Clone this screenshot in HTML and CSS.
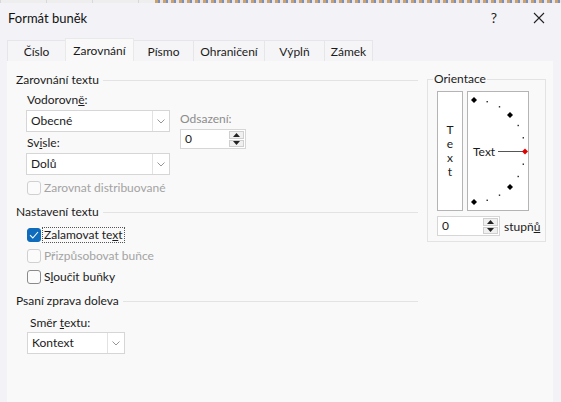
FILE: index.html
```html
<!DOCTYPE html>
<html lang="cs">
<head>
<meta charset="utf-8">
<title>Formát buněk</title>
<link rel="stylesheet" href="styles.css">
</head>
<body>
<div class="strip"></div>
<div class="dialog">
  <div class="titlebar">
    <span class="title">Formát buněk</span>
    <span class="help">?</span>
    <span class="close"><svg width="12" height="12" viewBox="0 0 12 12"><path d="M1 1 L11 11 M11 1 L1 11" stroke="#222" stroke-width="1.1" fill="none"/></svg></span>
  </div>
  <div class="tabs">
    <div class="tab t1">Číslo</div>
    <div class="tab t2 sel">Zarovnání</div>
    <div class="tab t3">Písmo</div>
    <div class="tab t4">Ohraničení</div>
    <div class="tab t5">Výplň</div>
    <div class="tab t6">Zámek</div>
  </div>
  <div class="panel">
    <div class="left">
      <div class="section s1"><span>Zarovnání textu</span></div>
      <div class="align-row">
        <div class="col-a">
          <div class="lbl l-vod">Vodorovn<u>ě</u>:</div>
          <div class="combo c-wide"><span class="cval">Obecné</span><span class="cbtn"><svg width="8" height="5" viewBox="0 0 8 5"><path d="M0.5 0.5 L4 4 L7.5 0.5" stroke="#8a8a8a" fill="none" stroke-width="0.9"/></svg></span></div>
          <div class="lbl l-svi">Sv<u>i</u>sle:</div>
          <div class="combo c-wide c-svi"><span class="cval">Dolů</span><span class="cbtn"><svg width="8" height="5" viewBox="0 0 8 5"><path d="M0.5 0.5 L4 4 L7.5 0.5" stroke="#8a8a8a" fill="none" stroke-width="0.9"/></svg></span></div>
          <div class="check disabled ch-dist"><span class="box"></span><span class="ctext">Zarovnat distribuované</span></div>
        </div>
        <div class="col-b">
          <div class="lbl dim">Odsazení:</div>
          <div class="spin sp-ods"><span class="sval">0</span><span class="sbtns"><span class="sup"><svg width="7" height="4" viewBox="0 0 7 4"><path d="M3.5 0 L7 4 L0 4 Z" fill="#222"/></svg></span><span class="sdown"><svg width="7" height="4" viewBox="0 0 7 4"><path d="M0 0 L7 0 L3.5 4 Z" fill="#222"/></svg></span></span></div>
        </div>
      </div>
      <div class="section s2"><span>Nastavení textu</span></div>
      <div class="check checked ch-wrap"><span class="box"><svg width="10" height="8" viewBox="0 0 10 8"><path d="M1 4.2 L3.8 7 L9 1" stroke="#fff" stroke-width="1.1" fill="none"/></svg></span><span class="ctext focus">Zalamovat te<u>x</u>t</span></div>
      <div class="check disabled ch-fit"><span class="box"></span><span class="ctext">Přizpůsobovat buňce</span></div>
      <div class="check ch-merge"><span class="box"></span><span class="ctext">S<u>l</u>oučit buňky</span></div>
      <div class="section s3"><span>Psaní zprava doleva</span></div>
      <div class="lbl l-smer">Směr <u>t</u>extu:</div>
      <div class="combo c-narrow"><span class="cval">Kontext</span><span class="cbtn"><svg width="8" height="5" viewBox="0 0 8 5"><path d="M0.5 0.5 L4 4 L7.5 0.5" stroke="#8a8a8a" fill="none" stroke-width="0.9"/></svg></span></div>
    </div>
    <fieldset class="orient">
      <legend>Orientace</legend>
      <div class="orient-boxes">
        <div class="vtext"><span>T</span><span>e</span><span>x</span><span>t</span></div>
        <div class="dial">
          <svg width="62" height="120" viewBox="0 0 62 120">
            <path d="M7 6 L10 9 L7 12 L4 9 Z" fill="#000"/>
            <rect x="19.5" y="10" width="1.4" height="1.4" fill="#222"/>
            <rect x="31.8" y="15.1" width="1.4" height="1.4" fill="#222"/>
            <path d="M43 21 L46 24 L43 27 L40 24 Z" fill="#000"/>
            <rect x="50.5" y="33.8" width="1.4" height="1.4" fill="#222"/>
            <rect x="55.6" y="46.1" width="1.4" height="1.4" fill="#222"/>
            <rect x="55.6" y="72.5" width="1.4" height="1.4" fill="#222"/>
            <rect x="50.5" y="84.8" width="1.4" height="1.4" fill="#222"/>
            <path d="M43 93 L46 96 L43 99 L40 96 Z" fill="#000"/>
            <rect x="31.8" y="103.5" width="1.4" height="1.4" fill="#222"/>
            <rect x="19.5" y="108.6" width="1.4" height="1.4" fill="#222"/>
            <path d="M7 108 L10 111 L7 114 L4 111 Z" fill="#000"/>
            <line x1="31" y1="60.5" x2="56" y2="60.5" stroke="#555" stroke-width="1"/>
            <path d="M58 57.5 L61 60.5 L58 63.5 L55 60.5 Z" fill="#e00000"/>
            <text x="6" y="65" class="dialtext">Text</text>
          </svg>
        </div>
      </div>
      <div class="deg-row">
        <div class="spin sp-deg"><span class="sval">0</span><span class="sbtns"><span class="sup"><svg width="7" height="4" viewBox="0 0 7 4"><path d="M3.5 0 L7 4 L0 4 Z" fill="#222"/></svg></span><span class="sdown"><svg width="7" height="4" viewBox="0 0 7 4"><path d="M0 0 L7 0 L3.5 4 Z" fill="#222"/></svg></span></span></div>
        <span class="deg-lbl">stupň<u>ů</u></span>
      </div>
    </fieldset>
  </div>
</div>
</body>
</html>
```
FILE: styles.css
```css
* { box-sizing: border-box; }
html, body {
  margin: 0;
  padding: 0;
  width: 561px;
  height: 402px;
  overflow: hidden;
  background: #f0f0f0;
  font-family: Lato, "Noto Sans", "DejaVu Sans", sans-serif;
  font-size: 12px;
  color: #1b1b1b;
}
.strip {
  height: 3px;
  background:
    repeating-linear-gradient(90deg, #c9a36b 0 3px, #7c8fb8 3px 5px, #e8e4ea 5px 8px) 155px 0 / 406px 3px no-repeat,
    repeating-linear-gradient(90deg, #d8d8d8 0 1px, #eeeeee 1px 46px) 0 0 / 155px 3px no-repeat,
    #ebebeb;
}
.dialog {
  background: #f3f3f7;
  height: 399px;
  display: flex;
  flex-direction: column;
}
.titlebar {
  height: 35px;
  display: flex;
  align-items: center;
  padding-left: 8px;
  padding-bottom: 6px;
}
.title {
  font-size: 13px;
  color: #111;
  flex: 1;
}
.help {
  font-size: 14px;
  color: #222;
  margin-right: 36px;
}
.close {
  display: flex;
  margin-right: 16px;
}
.tabs {
  display: flex;
  align-items: flex-end;
  height: 23px;
  padding-left: 7px;
}
.tab {
  height: 21px;
  display: flex;
  align-items: center;
  justify-content: center;
  background: #f5f5f7;
  border-top: 1px solid #e6e6ea;
  border-left: 1px solid #e6e6ea;
  color: #1b1b1b;
}
.t1 { width: 58px; }
.t2 { width: 69px; }
.t3 { width: 59px; border-left: none; }
.t4 { width: 71px; }
.t5 { width: 60px; }
.t6 { width: 49px; border-right: 1px solid #e6e6ea; }
.tab.sel {
  height: 23px;
  background: #f9f9f9;
  border-color: #e9e9e9;
  border-right: 1px solid #e9e9e9;
}
.panel {
  flex: 1;
  margin: 0 8px 0 7px;
  background: #f9f9f9;
  display: flex;
  align-items: flex-start;
  padding: 11px 0 0 9px;
}
.left {
  width: 402px;
  display: flex;
  flex-direction: column;
}
.section {
  display: flex;
  align-items: center;
  height: 16px;
  line-height: 16px;
}
.section::after {
  content: "";
  flex: 1;
  height: 1px;
  background: #e3e3e3;
  margin-left: 4px;
}
.s2 { margin-top: 8px; }
.s3 { margin-top: 8px; }
.lbl {
  height: 16px;
  line-height: 16px;
  padding-left: 11px;
}
.col-b .lbl { padding-left: 0; }
.dim { color: #8c8c8c; }
.l-vod { margin-top: 4px; }
.l-svi { margin-top: 3px; }
.l-smer { margin-top: 6px; padding-left: 14px; }
.align-row { display: flex; }
.col-a { display: flex; flex-direction: column; }
.col-b { margin-left: 10px; padding-top: 23px; display: flex; flex-direction: column; }
.combo {
  display: flex;
  height: 22px;
  margin-left: 10px;
  margin-top: 2px;
  background: #fff;
  border: 1px solid #d6d6d6;
}
.c-wide { width: 144px; }
.c-narrow { width: 98px; margin-left: 11px; margin-top: 1px; }
.cval {
  flex: 1;
  line-height: 20px;
  padding-left: 4px;
}
.cbtn {
  width: 17px;
  border-left: 1px solid #e2e2e2;
  display: flex;
  align-items: center;
  justify-content: center;
}
.check {
  display: flex;
  align-items: center;
  height: 16px;
  padding-left: 11px;
}
.check .box {
  width: 14px;
  height: 14px;
  border: 1px solid #8a8a8a;
  border-radius: 3px;
  background: #fbfbfb;
  display: flex;
  align-items: center;
  justify-content: center;
  margin-right: 2px;
}
.check .ctext { padding: 0 1px; line-height: 14px; }
.check.disabled .box { border-color: #d0d0d0; }
.check.disabled .ctext { color: #a3a3a3; }
.check.checked .box { background: #0f6cbd; border-color: #0f6cbd; }
.ctext.focus { outline: 1px dotted #555; outline-offset: 0; }
.ch-dist { margin-top: 5px; }
.ch-wrap { margin-top: 7px; }
.ch-fit { margin-top: 5px; }
.ch-merge { margin-top: 5px; }
.spin {
  display: flex;
  height: 20px;
  background: #fff;
  border: 1px solid #d6d6d6;
  margin-top: 2px;
}
.sp-ods { width: 66px; }
.sp-deg { width: 63px; margin-top: 0; }
.sval { flex: 1; line-height: 18px; padding-left: 4px; }
.sbtns {
  width: 17px;
  display: flex;
  flex-direction: column;
  padding: 1px;
  gap: 1px;
}
.sup, .sdown {
  flex: 1;
  background: #f0f0f0;
  border: 1px solid #cfcfcf;
  display: flex;
  align-items: center;
  justify-content: center;
}
.orient {
  margin: 0 0 0 9px;
  width: 119px;
  height: 170px;
  border: 1px solid #e3e3e3;
  padding: 0 0 0 9px;
}
.orient legend {
  padding: 0 1px;
  margin-left: -4px;
  line-height: 14px;
}
.orient-boxes {
  display: flex;
  gap: 4px;
  margin-top: 5px;
}
.vtext {
  width: 26px;
  height: 120px;
  border: 1px solid #b4b4b4;
  display: flex;
  flex-direction: column;
  align-items: center;
  justify-content: center;
  line-height: 14px;
  background: #fff;
}
.dial {
  width: 62px;
  height: 120px;
  border: 1px solid #b4b4b4;
  background: #fff;
}
.dial svg { display: block; margin: -1px; }
.dialtext {
  font-family: Lato, "Noto Sans", "DejaVu Sans", sans-serif;
  font-size: 12px;
  fill: #1b1b1b;
}
.deg-row {
  display: flex;
  align-items: center;
  margin-top: 5px;
}
.deg-lbl { margin-left: 4px; }
```
